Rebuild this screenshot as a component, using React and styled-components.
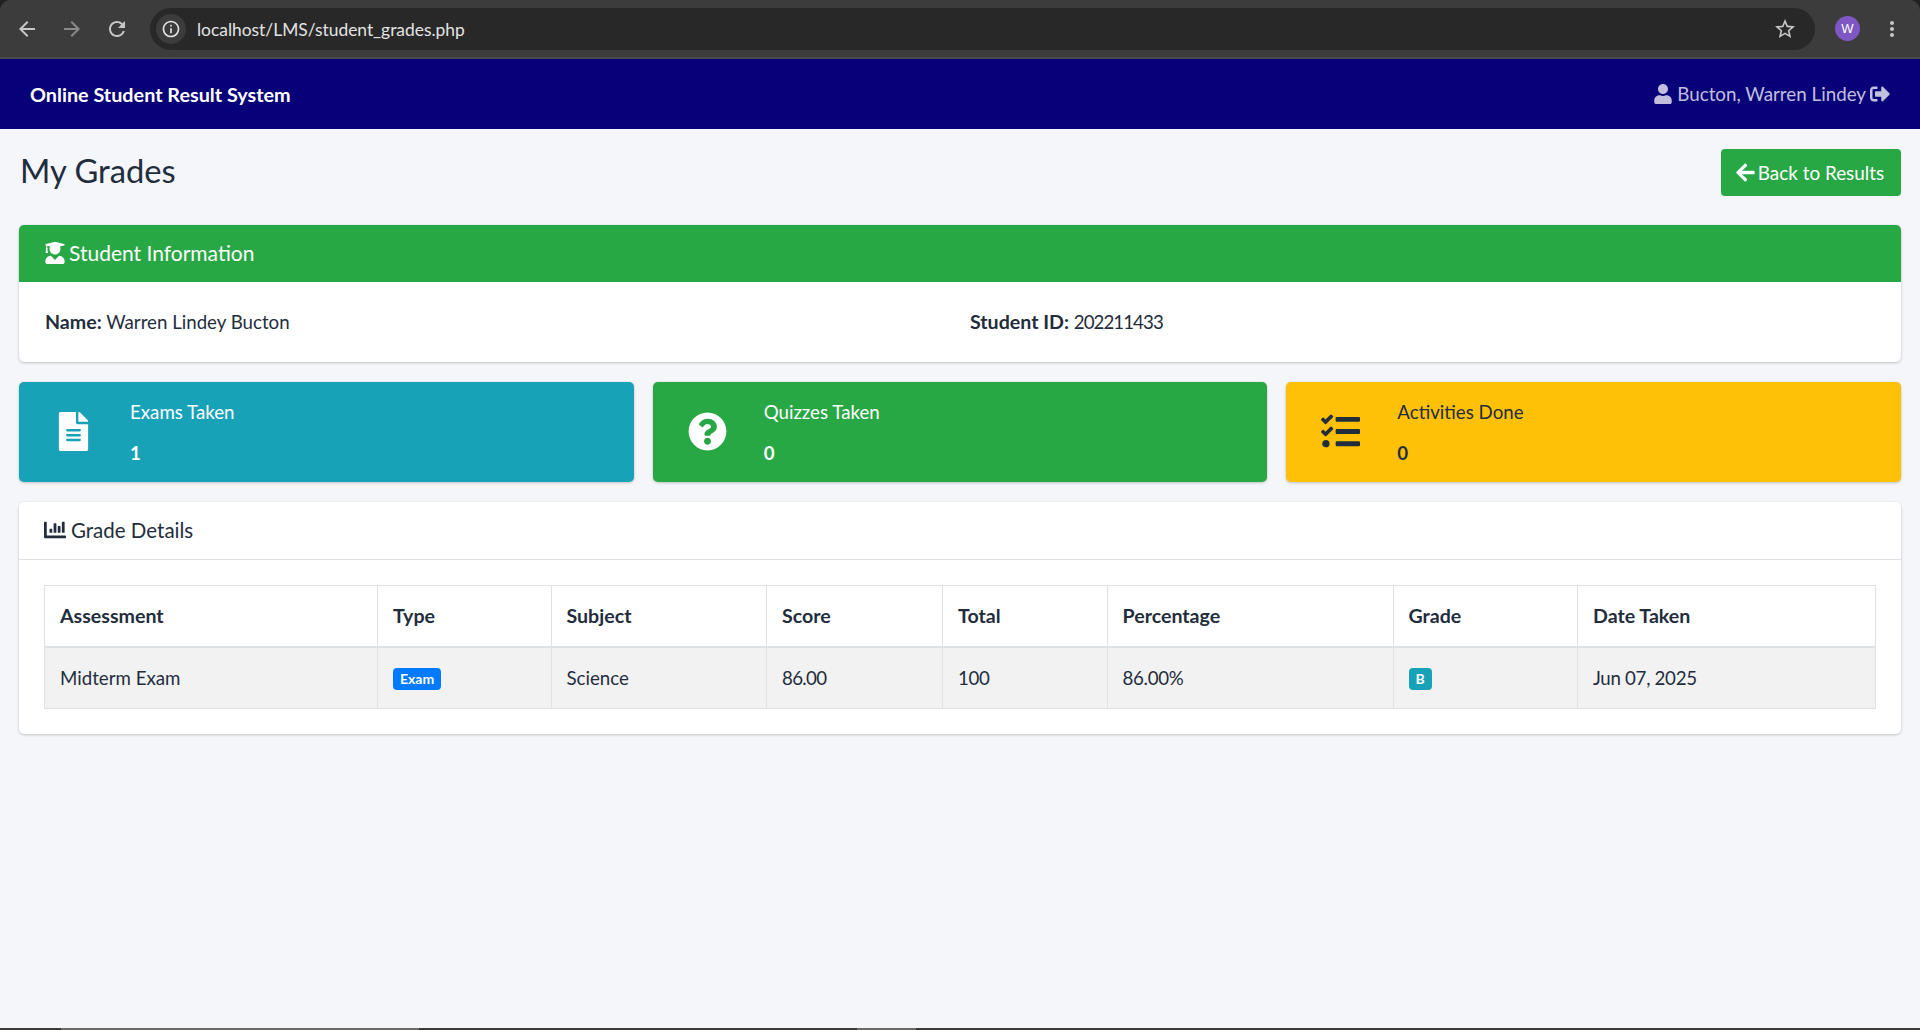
import React from 'react'
import styled, { createGlobalStyle } from 'styled-components'
import {
  FaUser, FaSignOutAlt, FaArrowLeft, FaUserGraduate, FaFileAlt,
  FaQuestionCircle, FaTasks, FaChartBar,
} from 'react-icons/fa'
import { MdArrowBack, MdArrowForward, MdRefresh, MdInfoOutline, MdStarBorder, MdMoreVert } from 'react-icons/md'

const GlobalStyle = createGlobalStyle`
  * { box-sizing: border-box; }
  html, body { margin: 0; padding: 0; height: 100%; }
  body {
    background: #f4f6f9;
    color: #1f2d3d;
    font-family: "Lato", "Liberation Sans", sans-serif;
    font-size: 18.7px;
    overflow: hidden;
  }
`

const Page = styled.div`
  height: 1030px;
  display: flex;
  flex-direction: column;
`

/* browser chrome */
const BrowserBar = styled.div`
  height: 59px;
  flex: none;
  background: #202020;
`
const BrowserInner = styled.div`
  height: 59px;
  display: flex;
  align-items: center;
  padding: 0 15px 0 15px;
  background: #3c3c3c;
  border-top-left-radius: 10px;
  border-top-right-radius: 10px;
  border-bottom: 2px solid #4b4b4b;
`
const NavBtn = styled.span`
  width: 24px;
  height: 24px;
  margin-right: 21px;
  display: flex;
  align-items: center;
  justify-content: center;
  font-size: 24px;
  color: ${p => (p.$off ? '#8a8a8a' : '#c7c7c7')};
`
const UrlPill = styled.div`
  width: 1665px;
  height: 42px;
  display: flex;
  align-items: center;
  background: #282828;
  border-radius: 21px;
  padding: 0 18px 0 6px;
`
const InfoChip = styled.span`
  width: 30px;
  height: 30px;
  border-radius: 50%;
  background: #3c3c3c;
  display: flex;
  align-items: center;
  justify-content: center;
  font-size: 20px;
  color: #e3e3e3;
`
const UrlText = styled.span`
  margin: 1px 0 0 11px;
  font-size: 17.4px;
  color: #e3e3e3;
  flex: 1;
`
const StarIcon = styled(MdStarBorder)`
  font-size: 24px;
  color: #c7c7c7;
`
const Avatar = styled.span`
  width: 25px;
  height: 25px;
  margin-left: 20px;
  border-radius: 50%;
  background: #7e57c2;
  color: #fff;
  font-family: "Liberation Sans", sans-serif;
  font-size: 13px;
  display: flex;
  align-items: center;
  justify-content: center;
`
const MenuIcon = styled(MdMoreVert)`
  font-size: 24px;
  margin-left: 20px;
  color: #c7c7c7;
`

/* app navbar */
const Navbar = styled.header`
  height: 70px;
  flex: none;
  background: #080078;
  display: flex;
  align-items: center;
  justify-content: space-between;
  padding: 0 30px 1px;
`
const Brand = styled.div`
  color: #fff;
  font-weight: 700;
  font-size: 19.8px;
`
const UserLink = styled.div`
  display: flex;
  align-items: center;
  gap: 4px;
  color: rgba(255, 255, 255, 0.75);
  font-size: 18.8px;
  svg { font-size: 20px; }
`

const Main = styled.main`
  flex: 1;
  padding: 20px 19px 0;
`
const TitleRow = styled.div`
  display: flex;
  align-items: center;
  justify-content: space-between;
  margin-bottom: 29px;
`
const Title = styled.h1`
  margin: -4px 0 0 1px;
  font-size: 32.7px;
  font-weight: 400;
  line-height: 1.2;
`
const BackButton = styled.a`
  height: 47px;
  width: 180px;
  display: flex;
  align-items: center;
  justify-content: center;
  gap: 2px;
  padding-right: 3px;
  background: #28a745;
  color: #fff;
  border-radius: 4px;
  font-size: 18.9px;
  svg { font-size: 21px; }
`

const Card = styled.section`
  background: #fff;
  border-radius: 5px;
  box-shadow: 0 0 1px rgba(0, 0, 0, 0.125), 0 1px 3px rgba(0, 0, 0, 0.2);
  margin-bottom: 20px;
  overflow: hidden;
`
const CardHeader = styled.div`
  height: ${p => (p.$green ? '57px' : '58px')};
  display: flex;
  align-items: center;
  gap: ${p => (p.$green ? '3px' : '5px')};
  padding: 0 25px 2px;
  font-size: ${p => (p.$green ? '21px' : '20.5px')};
  background: ${p => (p.$green ? '#28a745' : '#fff')};
  color: ${p => (p.$green ? '#fff' : '#1f2d3d')};
  border-bottom: ${p => (p.$green ? 'none' : '1px solid #dfe1e4')};
  svg { font-size: 22px; }
`
const InfoBody = styled.div`
  height: 80px;
  padding: 0 26px 1px;
  display: grid;
  grid-template-columns: 925px 1fr;
  align-items: center;
`
const InfoItem = styled.div`
  b { font-weight: 700; font-size: 19.6px; }
`
// Lato's digits run wider than the reference's, so numbers are tightened
const Num = styled.span`
  letter-spacing: ${p => p.$ls}px;
`

const Stats = styled.div`
  display: grid;
  grid-template-columns: repeat(3, 1fr);
  gap: 19px;
  margin-bottom: 20px;
`
const StatBox = styled.div`
  height: 100px;
  display: flex;
  border-radius: 5px;
  background: ${p => p.$bg};
  color: ${p => p.$fg};
  box-shadow: 0 0 1px rgba(0, 0, 0, 0.125), 0 1px 3px rgba(0, 0, 0, 0.2);
`
const StatIcon = styled.div`
  width: 109px;
  height: 98px;
  margin-right: 2px;
  display: flex;
  align-items: center;
  justify-content: center;
  font-size: 39px;
  flex: none;
`
const StatText = styled.div`
  display: flex;
  flex-direction: column;
  gap: 13px;
  padding-top: 16px;
  line-height: 28px;
  b { font-weight: 700; }
`

const TableWrap = styled.div`
  padding: 25px 26px 25px 25px;
`
const Table = styled.table`
  width: 100%;
  border-collapse: collapse;
  table-layout: fixed;
`
const Th = styled.th`
  width: ${p => p.$w}px;
  height: 61px;
  padding: 0 15px;
  text-align: left;
  font-weight: 700;
  font-size: 19.6px;
  border: 1px solid #dee2e6;
  border-bottom-width: 2px;
`
const Td = styled.td`
  height: 62px;
  padding: 0 15px;
  background: #f2f2f2;
  border: 1px solid #dee2e6;
`
const Badge = styled.span`
  display: inline-flex;
  align-items: center;
  justify-content: center;
  height: 22px;
  padding: 0 7px;
  border-radius: 4px;
  font-size: 14px;
  font-weight: 700;
  color: #fff;
  vertical-align: middle;
  background: ${p => p.$bg};
`

const Taskbar = styled.div`
  height: 2px;
  flex: none;
  background: #3a3a38;
  display: flex;
`
const TaskItem = styled.span`
  width: ${p => p.$w}px;
  margin-left: ${p => p.$ml}px;
  background: #6a6a68;
`

const columns = [
  ['Assessment', 333], ['Type', 173.5], ['Subject', 215.5], ['Score', 176],
  ['Total', 164.5], ['Percentage', 286], ['Grade', 184.5], ['Date Taken', 298],
]

const stats = [
  { label: 'Exams Taken', value: 1, bg: '#17a2b8', fg: '#fff', icon: <FaFileAlt /> },
  { label: 'Quizzes Taken', value: 0, bg: '#28a745', fg: '#fff', icon: <FaQuestionCircle /> },
  { label: 'Activities Done', value: 0, bg: '#ffc107', fg: '#1f2d3d', icon: <FaTasks /> },
]

const App = () => {
  return (
    <Page>
      <GlobalStyle />
      <BrowserBar>
        <BrowserInner>
          <NavBtn><MdArrowBack /></NavBtn>
          <NavBtn $off><MdArrowForward /></NavBtn>
          <NavBtn><MdRefresh /></NavBtn>
          <UrlPill>
            <InfoChip><MdInfoOutline /></InfoChip>
            <UrlText>localhost/LMS/student_grades.php</UrlText>
            <StarIcon />
          </UrlPill>
          <Avatar>W</Avatar>
          <MenuIcon />
        </BrowserInner>
      </BrowserBar>

      <Navbar>
        <Brand>Online Student Result System</Brand>
        <UserLink>
          <FaUser />
          <span>Bucton, Warren Lindey</span>
          <FaSignOutAlt />
        </UserLink>
      </Navbar>

      <Main>
        <TitleRow>
          <Title>My Grades</Title>
          <BackButton><FaArrowLeft /> Back to Results</BackButton>
        </TitleRow>

        <Card>
          <CardHeader $green><FaUserGraduate /> Student Information</CardHeader>
          <InfoBody>
            <InfoItem><b>Name:</b> Warren Lindey Bucton</InfoItem>
            <InfoItem><b>Student ID:</b> <Num $ls={-0.95}>202211433</Num></InfoItem>
          </InfoBody>
        </Card>

        <Stats>
          {stats.map(s => (
            <StatBox key={s.label} $bg={s.bg} $fg={s.fg}>
              <StatIcon>{s.icon}</StatIcon>
              <StatText>
                <span>{s.label}</span>
                <b>{s.value}</b>
              </StatText>
            </StatBox>
          ))}
        </Stats>

        <Card>
          <CardHeader><FaChartBar /> Grade Details</CardHeader>
          <TableWrap>
            <Table>
              <thead>
                <tr>
                  {columns.map(([name, w]) => <Th key={name} $w={w}>{name}</Th>)}
                </tr>
              </thead>
              <tbody>
                <tr>
                  <Td>Midterm Exam</Td>
                  <Td><Badge $bg="#007bff">Exam</Badge></Td>
                  <Td>Science</Td>
                  <Td><Num $ls={-0.7}>86.00</Num></Td>
                  <Td><Num $ls={-0.4}>100</Num></Td>
                  <Td><Num $ls={-0.3}>86.00%</Num></Td>
                  <Td><Badge $bg="#17a2b8">B</Badge></Td>
                  <Td><Num $ls={-0.3}>Jun 07, 2025</Num></Td>
                </tr>
              </tbody>
            </Table>
          </TableWrap>
        </Card>
      </Main>

      <Taskbar>
        <TaskItem $ml={61} $w={358} />
        <TaskItem $ml={438} $w={59} />
      </Taskbar>
    </Page>
  )
}

export default App
